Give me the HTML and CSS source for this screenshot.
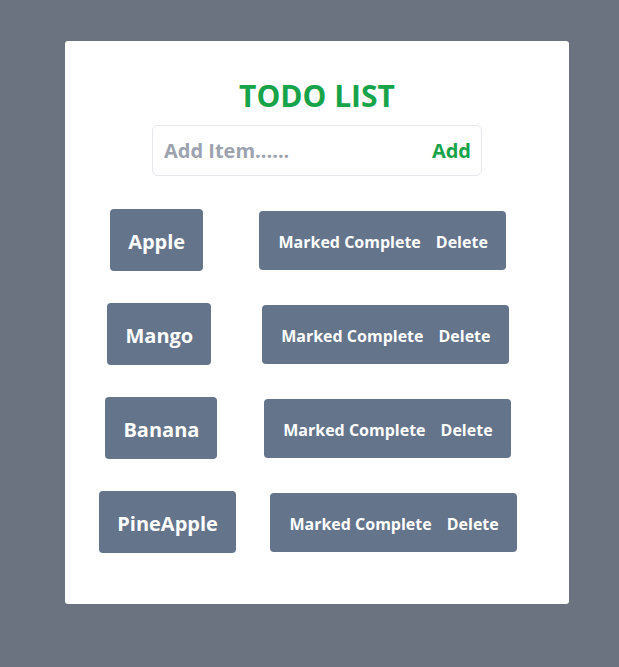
FILE: index.html
```html
<!DOCTYPE html>
<html>
<head>
<meta charset="utf-8">
<link rel="stylesheet" href="styles.css">
</head>
<body>
<div class="card">
  <h1 class="title">TODO LIST</h1>
  <div class="add-box">
    <input class="add-input" type="text" placeholder="Add Item......">
    <button class="add-btn">Add</button>
  </div>
  <ul class="list">
    <li class="row"><span class="item">Apple</span><span class="actions"><button class="act">Marked Complete</button><button class="act">Delete</button></span></li>
    <li class="row"><span class="item">Mango</span><span class="actions"><button class="act">Marked Complete</button><button class="act">Delete</button></span></li>
    <li class="row"><span class="item">Banana</span><span class="actions"><button class="act">Marked Complete</button><button class="act">Delete</button></span></li>
    <li class="row"><span class="item">PineApple</span><span class="actions"><button class="act">Marked Complete</button><button class="act">Delete</button></span></li>
  </ul>
</div>
</body>
</html>
```
FILE: styles.css
```css
* { box-sizing: border-box; }
html, body { margin: 0; padding: 0; }
body {
  background: #6b7280;
  font-family: "Open Sans", "Noto Sans", sans-serif;
  font-weight: 700;
  width: 619px;
  height: 667px;
  padding-top: 41px;
  padding-left: 65px;
}
.card {
  width: 504px;
  height: 563px;
  background: #fff;
  border-radius: 3px;
  padding-top: 35px;
  display: flex;
  flex-direction: column;
  align-items: center;
}
.title {
  margin: 0;
  font-size: 30px;
  line-height: 40px;
  color: #16a34a;
  font-weight: 700;
}
.add-box {
  margin-top: 9px;
  width: 330px;
  height: 51px;
  border: 1px solid #e5e7eb;
  border-radius: 6px;
  display: flex;
  align-items: center;
  padding: 0 10px 0 11px;
}
.add-input {
  flex: 1;
  min-width: 0;
  border: none;
  outline: none;
  font-family: inherit;
  font-weight: 700;
  font-size: 20px;
  color: #374151;
  background: transparent;
  padding: 0;
}
.add-input::placeholder { color: #9ca3af; }
.add-btn {
  border: none;
  background: transparent;
  font-family: inherit;
  font-weight: 700;
  font-size: 20px;
  color: #16a34a;
  padding: 0;
}
.list {
  list-style: none;
  margin: 33px 35px 0 17px;
  padding: 0;
  align-self: stretch;
  display: flex;
  flex-direction: column;
  gap: 32px;
}
.row {
  display: flex;
  justify-content: space-around;
  align-items: center;
}
.item {
  background: #64748b;
  color: #fff;
  border-radius: 4px;
  height: 62px;
  display: flex;
  align-items: center;
  padding: 2px 18px 0;
  font-size: 20px;
}
.actions {
  background: #64748b;
  border-radius: 4px;
  height: 59px;
  display: flex;
  align-items: center;
  gap: 15px;
  padding: 3px 18px 0 19px;
}
.act {
  border: none;
  background: transparent;
  color: #fff;
  font-family: inherit;
  font-weight: 700;
  font-size: 16px;
  padding: 0;
}
```
